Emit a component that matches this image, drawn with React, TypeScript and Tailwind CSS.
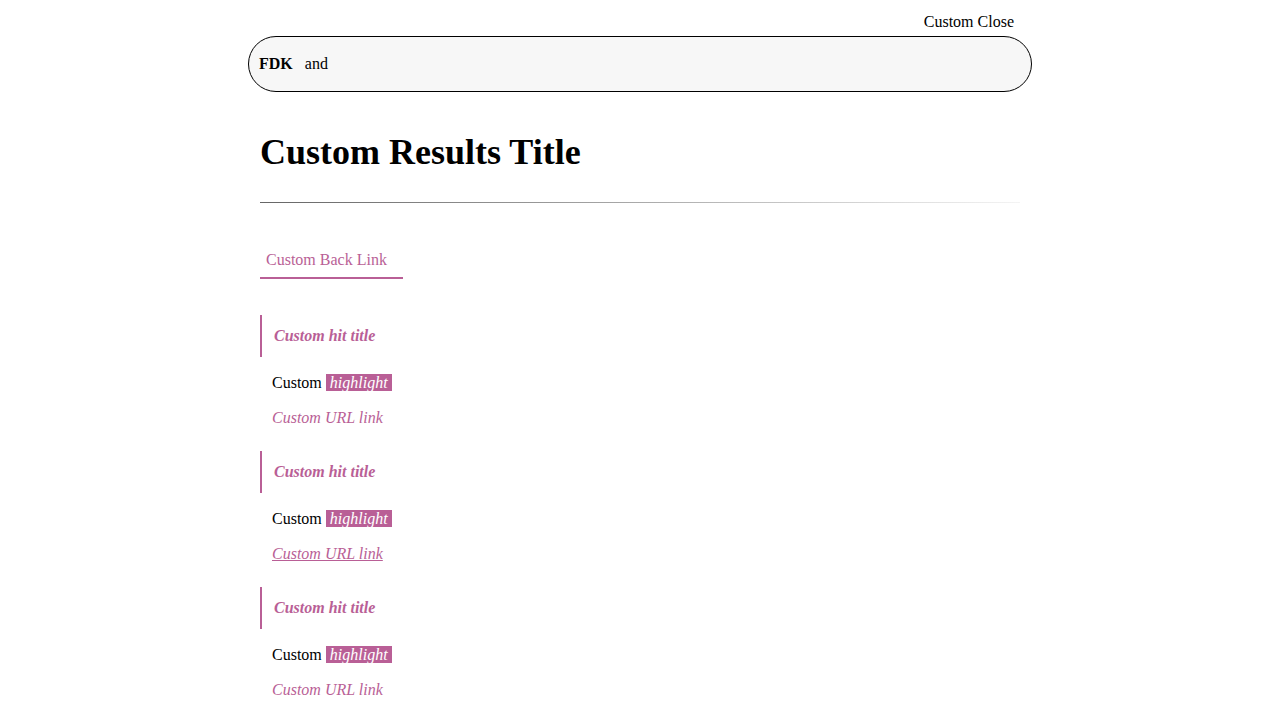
import React from "react";

const hits = [
  { id: 1, hovered: false },
  { id: 2, hovered: true },
  { id: 3, hovered: false },
];

function Hit({ hovered }: { hovered: boolean }) {
  return (
    <div className="flex flex-col">
      <div className="flex h-[42px] items-center border-l-2 border-[#b95f96] pl-3">
        <span className="text-base font-bold italic leading-[20px] text-[#b95f96]">Custom hit title</span>
      </div>
      <p className="mt-4 pl-3 text-base leading-[20px] text-black">
        Custom <span className="bg-[#b95f96] px-1 italic text-white">highlight</span>
      </p>
      <a
        href="#"
        className={`mt-[15px] pl-3 text-base italic leading-[20px] text-[#b95f96] ${hovered ? "underline" : "no-underline"}`}
      >
        Custom URL link
      </a>
    </div>
  );
}

export default function App() {
  return (
    <div className="min-h-screen bg-white font-['Liberation_Serif',serif] text-black">
      <div className="mx-auto w-[784px]">
        <div className="flex h-9 items-start justify-end pr-[18px] pt-[13px]">
          <button className="text-base leading-[18px]">Custom Close</button>
        </div>

        <div className="flex h-14 items-center gap-3 rounded-full border border-black bg-[#f7f7f7] px-[10px]">
          <span className="text-base font-bold">FDK</span>
          <span className="text-base">and</span>
        </div>

        <div className="px-3">
          <h1 className="mt-[39px] text-[36px] font-bold leading-[42px]">Custom Results Title</h1>
          <div className="mt-[29px] h-px bg-gradient-to-r from-[#666666] to-[#f4f4f4]" />

          <div className="mt-[38px] flex">
            <a href="#" className="border-b-2 border-[#b95f96] pb-[7px] pl-[6px] pr-4 pt-[9px] text-base leading-[20px] text-[#b95f96]">
              Custom Back Link
            </a>
          </div>

          <div className="mt-9 flex flex-col gap-[23px]">
            {hits.map((h) => (
              <Hit key={h.id} hovered={h.hovered} />
            ))}
          </div>
        </div>
      </div>
    </div>
  );
}
